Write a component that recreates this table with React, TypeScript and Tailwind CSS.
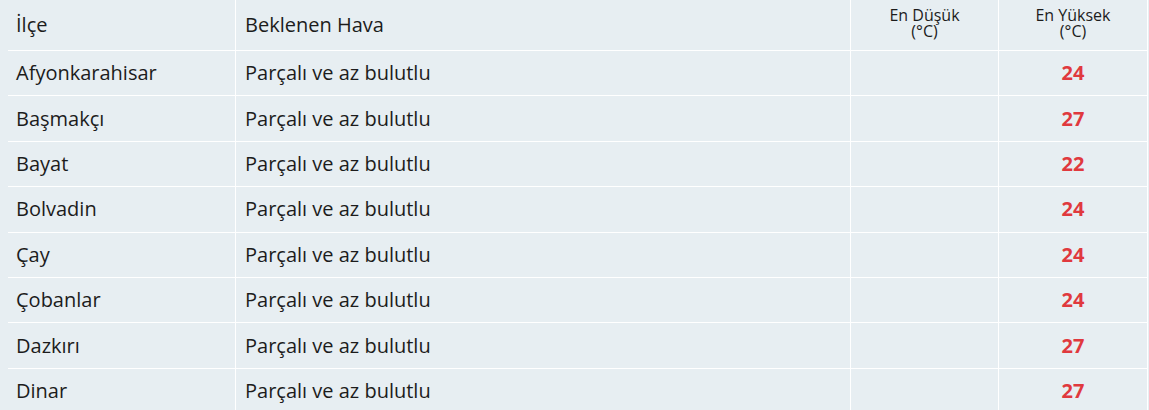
import React from 'react';

interface Row {
  ilce: string;
  hava: string;
  min: string;
  max: string;
}

const ROWS: Row[] = [
  { ilce: 'Afyonkarahisar', hava: 'Parçalı ve az bulutlu', min: '', max: '24' },
  { ilce: 'Başmakçı', hava: 'Parçalı ve az bulutlu', min: '', max: '27' },
  { ilce: 'Bayat', hava: 'Parçalı ve az bulutlu', min: '', max: '22' },
  { ilce: 'Bolvadin', hava: 'Parçalı ve az bulutlu', min: '', max: '24' },
  { ilce: 'Çay', hava: 'Parçalı ve az bulutlu', min: '', max: '24' },
  { ilce: 'Çobanlar', hava: 'Parçalı ve az bulutlu', min: '', max: '24' },
  { ilce: 'Dazkırı', hava: 'Parçalı ve az bulutlu', min: '', max: '27' },
  { ilce: 'Dinar', hava: 'Parçalı ve az bulutlu', min: '', max: '27' },
];

const App: React.FC = () => {
  return (
    <div
      className="w-[1149px] h-[410px] overflow-hidden bg-[#e7eef2] pl-2 pr-px text-[#1c1c1c]"
      style={{ fontFamily: '"Open Sans", "Liberation Sans", sans-serif' }}
    >
      {/* Header */}
      <div className="grid grid-cols-[227px_615px_148px_150px] h-[51px] border-b border-white">
        <div className="flex items-center pl-2 text-[20px] pb-px">İlçe</div>
        <div className="flex items-center pl-[9px] text-[20px] border-l border-white pb-px">Beklenen Hava</div>
        <div className="flex flex-col items-center pt-[7px] text-[16px] leading-[16px] border-l border-white">
          <span>En Düşük</span>
          <span>(°C)</span>
        </div>
        <div className="flex flex-col items-center pt-[7px] text-[16px] leading-[16px] border-l border-r border-white">
          <span>En Yüksek</span>
          <span>(°C)</span>
        </div>
      </div>

      {/* Rows */}
      {ROWS.map((r) => (
        <div
          key={r.ilce}
          className="grid grid-cols-[227px_615px_148px_150px] h-[45.4px] border-b border-white"
        >
          <div className="flex items-center pl-2 text-[20px]">{r.ilce}</div>
          <div className="flex items-center pl-[9px] text-[20px] border-l border-white">{r.hava}</div>
          <div className="flex items-center justify-center text-[20px] border-l border-white">{r.min}</div>
          <div className="flex items-center justify-center text-[20px] font-bold text-[#e0393e] border-l border-r border-white">
            {r.max}
          </div>
        </div>
      ))}
    </div>
  );
};

export default App;
